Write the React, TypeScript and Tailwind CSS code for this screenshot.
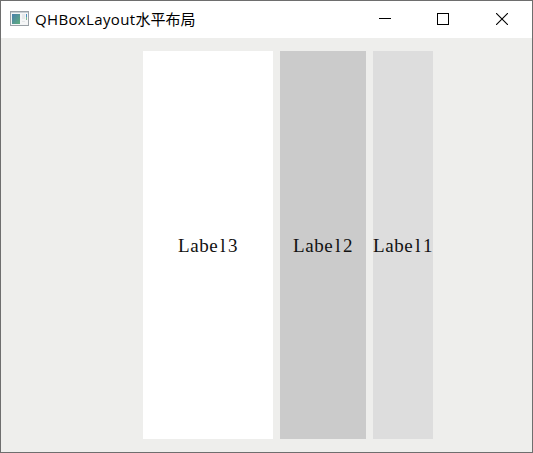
function AppIcon() {
  return (
    <svg className="mb-0.5" width="19" height="15" viewBox="0 0 19 15" shapeRendering="crispEdges">
      <defs>
        <linearGradient id="pane" x1="0" y1="0" x2="1" y2="1">
          <stop offset="0" stopColor="#4a7fae" />
          <stop offset="1" stopColor="#5fae7c" />
        </linearGradient>
      </defs>
      <rect x="0.5" y="0.5" width="18" height="14" fill="#f5f6f7" stroke="#9aa1a7" />
      <rect x="1" y="1" width="17" height="1" fill="#c9d0d5" />
      <rect x="2" y="3" width="8" height="10" fill="url(#pane)" />
      <rect x="12" y="3" width="3" height="5" fill="#e6e9eb" />
      <rect x="16" y="3" width="1" height="3" fill="#4a8fc0" />
      <rect x="16" y="6" width="1" height="3" fill="#7dbb92" />
      <rect x="12" y="10" width="3" height="1" fill="#e4e6e8" />
    </svg>
  );
}

function TitleBar() {
  return (
    <header className="flex h-[37px] shrink-0 items-center bg-white pl-[9px]">
      <AppIcon />
      <h1 className="ml-1.5 flex-1 whitespace-nowrap pb-0.5 font-['Open_Sans','Noto_Sans_CJK_SC',sans-serif] text-[15px] leading-5 text-black">
        <span className="tracking-[0.35px]">QHBoxLayout</span>水平布局
      </h1>
      <div className="flex h-full pb-px">
        <button aria-label="Minimize" className="flex w-[58px] items-center justify-center">
          <svg width="12" height="12" shapeRendering="crispEdges">
            <rect y="5" width="12" height="1" />
          </svg>
        </button>
        <button aria-label="Maximize" className="flex w-[58px] items-center justify-center">
          <svg width="12" height="12" shapeRendering="crispEdges">
            <rect x="0.5" y="0.5" width="11" height="11" fill="none" stroke="black" />
          </svg>
        </button>
        <button aria-label="Close" className="flex w-[60px] items-center justify-center">
          <svg width="12" height="12">
            <path d="M0 0 12 12M12 0 0 12" stroke="black" strokeWidth="1.1" />
          </svg>
        </button>
      </div>
    </header>
  );
}

function Label({ digit, className }: { digit: string; className: string }) {
  return (
    <div
      className={`flex items-center justify-center whitespace-pre pt-0.5 font-['Liberation_Serif',serif] text-[19px] leading-6 text-[#111] ${className}`}
    >
      <div className="w-[60px]">
        <span className="tracking-[0.6px]">Lab</span>
        <span className="tracking-[2.4px]">e</span>
        <span className="tracking-[2.4px]">l</span>
        <span>{digit}</span>
      </div>
    </div>
  );
}

export default function App() {
  return (
    <main className="flex h-[453px] w-[533px] flex-col overflow-hidden border border-[#6e6e6e] bg-[#eeeeec]">
      <TitleBar />
      <section className="flex flex-1 gap-[7px] pt-[13px] pb-[13px] pl-[142px]">
        <Label digit="3" className="w-[130px] bg-white" />
        <Label digit="2" className="w-[86px] bg-[#cbcbcb]" />
        <Label digit="1" className="w-[60px] bg-[#dddddd]" />
      </section>
    </main>
  );
}
